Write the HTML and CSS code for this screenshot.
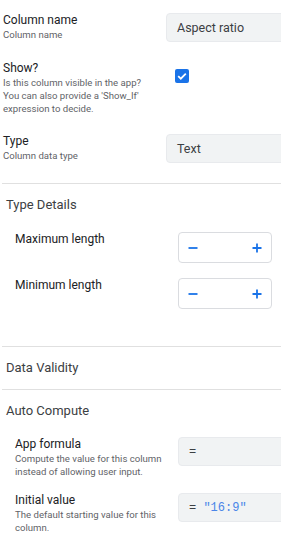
FILE: index.html
```html
<!DOCTYPE html>
<html lang="en">
<head>
    <meta charset="UTF-8">
    <meta name="viewport" content="width=device-width, initial-scale=1.0">
    <title>Column settings</title>
    <link rel="stylesheet" href="styles.css">
</head>
<body>
    <div class="panel">
        <div class="field">
            <div class="field-label">
                <div class="label">Column name</div>
                <div class="hint">Column name</div>
            </div>
            <div class="field-control">
                <div class="input">Aspect ratio</div>
            </div>
        </div>

        <div class="field">
            <div class="field-label">
                <div class="label">Show?</div>
                <div class="hint">Is this column visible in the app? You can also provide a 'Show_If' expression to decide.</div>
            </div>
            <div class="field-control">
                <span class="checkbox">
                    <svg viewBox="0 0 14 14" width="14" height="14">
                        <path d="M3.2 7.2 L5.8 9.7 L10.8 4.6" fill="none" stroke="#fff" stroke-width="1.8"/>
                    </svg>
                </span>
            </div>
        </div>

        <div class="field">
            <div class="field-label">
                <div class="label">Type</div>
                <div class="hint">Column data type</div>
            </div>
            <div class="field-control">
                <div class="input">Text</div>
            </div>
        </div>

        <hr class="divider">

        <section class="group">
            <h2 class="group-title">Type Details</h2>
            <div class="group-body">
                <div class="field">
                    <div class="field-label">
                        <div class="label">Maximum length</div>
                    </div>
                    <div class="field-control">
                        <div class="stepper">
                            <span class="step">
                                <svg viewBox="0 0 10 10" width="10" height="10"><path d="M0.5 5 H9.5" stroke="#1a73e8" stroke-width="1.8"/></svg>
                            </span>
                            <span class="step">
                                <svg viewBox="0 0 10 10" width="10" height="10"><path d="M0.5 5 H9.5 M5 0.5 V9.5" stroke="#1a73e8" stroke-width="1.8"/></svg>
                            </span>
                        </div>
                    </div>
                </div>
                <div class="field">
                    <div class="field-label">
                        <div class="label">Minimum length</div>
                    </div>
                    <div class="field-control">
                        <div class="stepper">
                            <span class="step">
                                <svg viewBox="0 0 10 10" width="10" height="10"><path d="M0.5 5 H9.5" stroke="#1a73e8" stroke-width="1.8"/></svg>
                            </span>
                            <span class="step">
                                <svg viewBox="0 0 10 10" width="10" height="10"><path d="M0.5 5 H9.5 M5 0.5 V9.5" stroke="#1a73e8" stroke-width="1.8"/></svg>
                            </span>
                        </div>
                    </div>
                </div>
            </div>
        </section>

        <hr class="divider">

        <section class="group">
            <h2 class="group-title">Data Validity</h2>
        </section>

        <hr class="divider">

        <section class="group">
            <h2 class="group-title">Auto Compute</h2>
            <div class="group-body">
                <div class="field">
                    <div class="field-label">
                        <div class="label">App formula</div>
                        <div class="hint">Compute the value for this column instead of allowing user input.</div>
                    </div>
                    <div class="field-control">
                        <div class="input formula"><span><span class="op">=</span></span></div>
                    </div>
                </div>
                <div class="field">
                    <div class="field-label">
                        <div class="label">Initial value</div>
                        <div class="hint">The default starting value for this column.</div>
                    </div>
                    <div class="field-control">
                        <div class="input formula"><span><span class="op">= </span><span class="str">"16:9"</span></span></div>
                    </div>
                </div>
            </div>
        </section>
    </div>
</body>
</html>
```

FILE: styles.css
```css
:root {
    --text: #202124;
    --text-light: #5f6368;
    --heading: #3c4043;
    --line: #e0e0e0;
    --input-bg: #f1f3f4;
    --blue: #1a73e8;
}

* {
    box-sizing: border-box;
    margin: 0;
    padding: 0;
}

html, body {
    overflow: hidden;
}

body {
    font-family: Roboto, 'Noto Sans', sans-serif;
    color: var(--text);
    background: #fff;
}

.panel {
    padding-top: 13px;
    width: 281px;
}

.field {
    display: flex;
    align-items: flex-start;
    padding-left: 3px;
    margin-bottom: 19px;
}

.field-label {
    flex: 0 0 163px;
    padding-right: 12px;
}

.group-body .field-label {
    padding-right: 2px;
}

.label {
    font-size: 12px;
    font-weight: 400;
    line-height: 15px;
    color: var(--text);
}

.hint {
    font-size: 9.6px;
    line-height: 13px;
    color: var(--text-light);
}

.field-control {
    flex: 0 0 auto;
}

.input {
    width: 140px;
    height: 29px;
    padding-left: 10px;
    display: flex;
    align-items: center;
    background: var(--input-bg);
    border: 1px solid #e8eaed;
    border-radius: 4px;
    font-size: 12.5px;
    color: var(--heading);
}

.checkbox {
    display: flex;
    width: 14px;
    height: 14px;
    margin: 8px 0 0 9px;
    background: var(--blue);
    border-radius: 2px;
}

.divider {
    border: none;
    border-top: 1px solid var(--line);
    margin: 0 0 0 2px;
}

.panel > .field:last-of-type {
    margin-bottom: 20px;
}

.group-title {
    font-size: 13px;
    font-weight: 400;
    line-height: 16px;
    padding: 13px 6px 13px;
    color: var(--heading);
}

.group-body {
    padding: 5px 0 0 12px;
}

.group-body .field {
    margin-bottom: 15px;
}

.group:first-of-type .group-body {
    padding-top: 6px;
    padding-bottom: 22px;
}

.stepper {
    width: 94px;
    height: 31px;
    display: flex;
    align-items: center;
    justify-content: space-between;
    padding: 0 9px;
    border: 1px solid #dadce0;
    border-radius: 4px;
    background: #fff;
}

.step {
    display: flex;
}

.formula {
    font-family: 'Liberation Mono', 'DejaVu Sans Mono', monospace;
    font-size: 12px;
    white-space: pre;
}

.formula .op {
    color: var(--heading);
}

.formula .str {
    color: #4a86e8;
}
```
